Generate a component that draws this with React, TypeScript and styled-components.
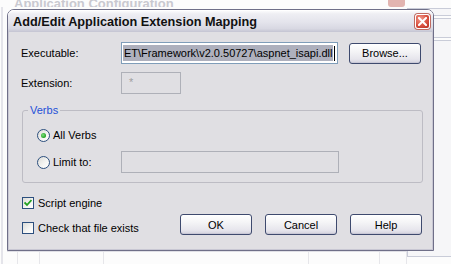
import styled, { createGlobalStyle } from 'styled-components'

const Global = createGlobalStyle`
  html, body { margin: 0; padding: 0; }
  body { font-family: "Liberation Sans", Arial, sans-serif; font-size: 11px; color: #000; }
`

const Screen = styled.div`
  position: relative;
  width: 451px;
  height: 264px;
  overflow: hidden;
  background: #fcfcfc;
`

/* the parent window behind the dialog */
const Parent = styled.div`
  display: flex;
  flex-direction: column;
  height: 100%;
`
const ParentTitle = styled.div`
  display: flex;
  align-items: flex-end;
  height: 7px;
  padding-left: 14px;
  overflow: hidden;
  font-size: 13px;
  font-weight: bold;
  color: #c9c9d0;
  line-height: 13px;
`
const ParentTitleText = styled.span`
  flex: 1;
  margin-bottom: -3px;
`
const ParentClose = styled.div`
  width: 17px;
  height: 14px;
  margin: -8px 46px 0 0;
  border-radius: 3px;
  background: #e2b4b0;
`
const ParentBody = styled.div`
  flex: 1;
  display: flex;
  border-left: 2px solid #e4e4ea;
  margin-left: 1px;
`
const ParentMain = styled.div`
  flex: 1;
  display: flex;
  flex-direction: column;
  justify-content: flex-end;
`
const ListGrid = styled.div`
  height: 12px;
  border-top: 1px solid #e0e0e6;
  display: grid;
  grid-template-columns: 11px 22px 64px 205px 71px 1fr;
  margin-left: 4px;
`
const ListCell = styled.div`
  border-right: 1px solid #e6e6ea;
`
const ParentSide = styled.div`
  width: 44px;
  display: flex;
  flex-direction: column;
  gap: 2px;
  padding-top: 1px;
`
const SideTab = styled.div<{ $h: number }>`
  height: ${p => p.$h}px;
  border: 1px solid #c9ccd8;
  border-right: none;
  background: #f6f6f8;
`

/* dialog */
const Dialog = styled.div`
  position: absolute;
  left: 7px;
  top: 9px;
  width: 427px;
  height: 242px;
  display: flex;
  flex-direction: column;
  border: 1px solid #6f6f88;
  border-radius: 7px 7px 0 0;
  background: #e0dfe3;
  box-sizing: border-box;
`
const TitleBar = styled.div`
  height: 22px;
  display: flex;
  align-items: center;
  padding: 0 3px 0 5px;
  border-radius: 6px 6px 0 0;
  background: linear-gradient(#ffffff 0%, #eeeef3 18%, #e4e4ec 55%, #d8d8e2 85%, #c4c4d2 100%);
  box-shadow: inset 0 1px 0 #ffffff;
`
const TitleText = styled.div`
  flex: 1;
  font-size: 12.7px;
  font-weight: bold;
  color: #111;
  padding-top: 1px;
`
const CloseBtn = styled.div`
  width: 15px;
  height: 15px;
  border: 1px solid #ffffff;
  border-radius: 3px;
  box-sizing: border-box;
  display: flex;
  align-items: center;
  justify-content: center;
  background: radial-gradient(circle at 35% 30%, #f29a8c 0%, #d9503f 55%, #b52f20 100%);
  box-shadow: 0 0 0 1px #c06a60;
`
const Body = styled.div`
  flex: 1;
  display: flex;
  flex-direction: column;
  padding: 10px 10px 0 12px;
  border-left: 1px solid #c8c7d3;
  border-right: 1px solid #c8c7d3;
  border-bottom: 1px solid #c8c7d3;
`
const Row = styled.div<{ $top?: number }>`
  display: flex;
  align-items: center;
  height: 22px;
  margin-top: ${p => p.$top ?? 0}px;
`
const FieldLabel = styled.div`
  width: 100px;
`
const TextBox = styled.div<{ $w: number; $disabled?: boolean }>`
  width: ${p => p.$w}px;
  height: 22px;
  box-sizing: border-box;
  border: 1px solid ${p => (p.$disabled ? '#aeb0b8' : '#7f9db9')};
  background: ${p => (p.$disabled ? '#e0dfe3' : '#ffffff')};
  display: flex;
  align-items: center;
  padding: 0 1px;
  overflow: hidden;
  white-space: nowrap;
`
const Selected = styled.span`
  background: #aeb0bd;
  line-height: 16px;
  padding-left: 1px;
`
const Caret = styled.span`
  width: 1px;
  height: 15px;
  background: #000;
  margin-left: 1px;
`
const Star = styled.span`
  color: #a0a0a0;
  margin: -3px 0 0 6px;
`
const Button = styled.div`
  width: 72px;
  height: 21px;
  box-sizing: border-box;
  border: 1px solid #3e4a6e;
  border-radius: 3px;
  display: flex;
  align-items: center;
  justify-content: center;
  background: linear-gradient(#ffffff 0%, #f4f4f6 40%, #e6e5ec 80%, #d3d2dd 100%);
  box-shadow: inset 0 -1px 0 #c9c8d6, inset 0 1px 0 #fff;
`
const Spacer = styled.div<{ $w: number }>`
  width: ${p => p.$w}px;
`
const Group = styled.fieldset`
  margin: 10px 0 0 1px;
  width: 401px;
  height: 79px;
  box-sizing: border-box;
  border: 1px solid #bdbcc4;
  border-radius: 3px;
  padding: 10px 0 0 14px;
  display: flex;
  flex-direction: column;
`
const Legend = styled.legend`
  color: #1f50d8;
  padding: 0 2px;
  margin-left: -9px;
  line-height: 13px;
`
const OptRow = styled.div<{ $h: number; $top?: number }>`
  display: flex;
  align-items: center;
  height: ${p => p.$h}px;
  margin-top: ${p => p.$top ?? 0}px;
`
const RadioLabel = styled.div`
  width: 68px;
  padding-left: 3px;
`
const Radio = styled.div`
  width: 13px;
  height: 13px;
  box-sizing: border-box;
  border-radius: 50%;
  border: 1px solid #2c4f7e;
  background: linear-gradient(135deg, #dcdcd8 0%, #f6f6f4 60%, #ffffff 100%);
  display: flex;
  align-items: center;
  justify-content: center;
`
const Dot = styled.div`
  width: 5px;
  height: 5px;
  border-radius: 50%;
  background: radial-gradient(circle at 40% 40%, #7fe07f 0%, #21a121 70%);
`
const Footer = styled.div`
  display: flex;
  justify-content: space-between;
  margin-top: 13px;
`
const Checks = styled.div`
  display: flex;
  flex-direction: column;
  gap: 12px;
  margin-left: 1px;
`
const CheckRow = styled.div`
  display: flex;
  align-items: center;
  gap: 4px;
  height: 13px;
`
const CheckBox = styled.div`
  width: 12px;
  height: 12px;
  box-sizing: border-box;
  border: 1px solid #2c4f7e;
  background: linear-gradient(135deg, #dcdcd8 0%, #f6f6f4 60%, #ffffff 100%);
  display: flex;
  align-items: center;
  justify-content: center;
`
const Buttons = styled.div`
  display: flex;
  gap: 13px;
  align-self: flex-end;
  margin-bottom: -1px;
`

const Check = () => (
  <svg width="8" height="8" viewBox="0 0 8 8">
    <path d="M0.5 3.5 L3 6 L7.5 1" fill="none" stroke="#21a121" strokeWidth="1.8" />
  </svg>
)

const CloseX = () => (
  <svg width="9" height="9" viewBox="0 0 9 9">
    <path d="M1 1 L8 8 M8 1 L1 8" stroke="#fff" strokeWidth="2" strokeLinecap="square" />
  </svg>
)

export default function App() {
  return (
    <>
      <Global />
      <Screen>
        <Parent>
          <ParentTitle>
            <ParentTitleText>Application Configuration</ParentTitleText>
            <ParentClose />
          </ParentTitle>
          <ParentBody>
            <ParentMain>
              <ListGrid>
                {[0, 1, 2, 3, 4, 5].map(i => (
                  <ListCell key={i} />
                ))}
              </ListGrid>
            </ParentMain>
            <ParentSide>
              <SideTab $h={6} />
              <SideTab $h={18} />
              <SideTab $h={215} />
            </ParentSide>
          </ParentBody>
        </Parent>

        <Dialog>
          <TitleBar>
            <TitleText>Add/Edit Application Extension Mapping</TitleText>
            <CloseBtn>
              <CloseX />
            </CloseBtn>
          </TitleBar>
          <Body>
            <Row>
              <FieldLabel>Executable:</FieldLabel>
              <TextBox $w={217}>
                <Selected>ET\Framework\v2.0.50727\aspnet_isapi.dll</Selected>
                <Caret />
              </TextBox>
              <Spacer $w={11} />
              <Button>Browse...</Button>
            </Row>
            <Row $top={8}>
              <FieldLabel>Extension:</FieldLabel>
              <TextBox $w={60} $disabled>
                <Star>*</Star>
              </TextBox>
            </Row>

            <Group>
              <Legend>Verbs</Legend>
              <OptRow $h={16}>
                <Radio>
                  <Dot />
                </Radio>
                <RadioLabel>All Verbs</RadioLabel>
              </OptRow>
              <OptRow $h={22} $top={8}>
                <Radio />
                <RadioLabel>Limit to:</RadioLabel>
                <TextBox $w={218} $disabled />
              </OptRow>
            </Group>

            <Footer>
              <Checks>
                <CheckRow>
                  <CheckBox>
                    <Check />
                  </CheckBox>
                  Script engine
                </CheckRow>
                <CheckRow>
                  <CheckBox />
                  Check that file exists
                </CheckRow>
              </Checks>
              <Buttons>
                <Button>OK</Button>
                <Button>Cancel</Button>
                <Button>Help</Button>
              </Buttons>
            </Footer>
          </Body>
        </Dialog>
      </Screen>
    </>
  )
}
